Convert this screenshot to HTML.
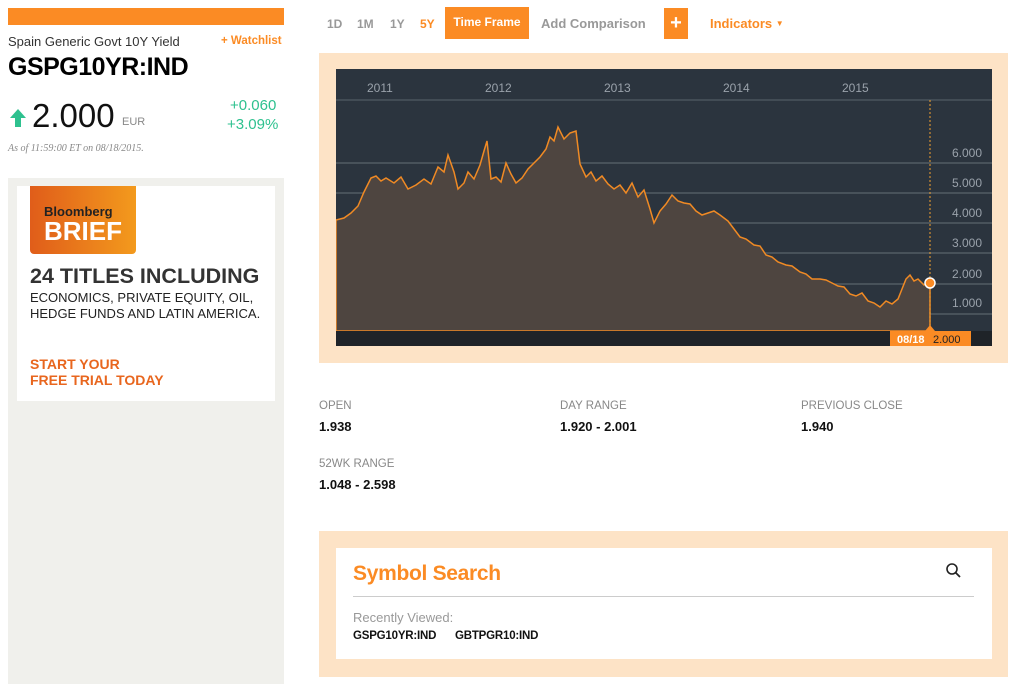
<!DOCTYPE html><html><head><style>
body{margin:0;width:1024px;height:684px;background:#fff;font-family:"Liberation Sans",sans-serif;position:relative;overflow:hidden}
.a{position:absolute;white-space:nowrap}
.b{font-weight:bold}
</style></head><body>
<div class="a" style="left:8px;top:8px;width:276px;height:17px;background:#fb8b24"></div>
<div class="a" style="left:8px;top:34px;font-size:13px;color:#333">Spain Generic Govt 10Y Yield</div>
<div class="a b" style="left:221px;top:35px;font-size:11.5px;color:#fb8b24">+ Watchlist</div>
<div class="a b" style="left:8px;top:53px;font-size:25px;color:#000;letter-spacing:-0.5px">GSPG10YR:IND</div>
<svg class="a" style="left:9px;top:108px" width="18" height="20"><path d="M9 1 L17 10 L12 10 L12 19 L6 19 L6 10 L1 10 Z" fill="#2ec18f"/></svg>
<div class="a" style="left:32px;top:97px;font-size:33px;color:#111">2.000</div>
<div class="a" style="left:122px;top:116px;font-size:11px;color:#888">EUR</div>
<div class="a" style="left:230px;top:97px;font-size:15px;color:#2ec18f">+0.060</div>
<div class="a" style="left:227px;top:116px;font-size:15px;color:#2ec18f">+3.09%</div>
<div class="a" style="left:8px;top:143px;font-size:10px;color:#888;font-style:italic;font-family:'Liberation Serif',serif">As of 11:59:00 ET on 08/18/2015.</div>
<div class="a" style="left:8px;top:178px;width:276px;height:506px;background:#f0f0ec"></div>
<div class="a" style="left:17px;top:186px;width:258px;height:215px;background:#fff"></div>
<div class="a" style="left:30px;top:186px;width:106px;height:68px;background:linear-gradient(90deg,#e05d1a,#f39a1d);border-radius:0 0 4px 4px"></div>
<div class="a b" style="left:44px;top:204px;font-size:13px;color:#222">Bloomberg</div>
<div class="a b" style="left:44px;top:216px;font-size:26px;color:#fff">BRIEF</div>
<div class="a b" style="left:30px;top:264px;font-size:21.5px;color:#333">24 TITLES INCLUDING</div>
<div class="a" style="left:30px;top:290px;font-size:13px;color:#222;line-height:16px">ECONOMICS, PRIVATE EQUITY, OIL,<br>HEDGE FUNDS AND LATIN AMERICA.</div>
<div class="a b" style="left:30px;top:356px;font-size:14px;color:#e8661e;line-height:16px">START YOUR<br>FREE TRIAL TODAY</div>

<div class="a b" style="left:327px;top:17px;font-size:12px;color:#999">1D</div>
<div class="a b" style="left:357px;top:17px;font-size:12px;color:#999">1M</div>
<div class="a b" style="left:390px;top:17px;font-size:12px;color:#999">1Y</div>
<div class="a b" style="left:420px;top:17px;font-size:12px;color:#fb8b24">5Y</div>
<div class="a b" style="left:445px;top:7px;width:84px;height:32px;background:#fb8b24;color:#fff;font-size:12px;line-height:31px;text-align:center">Time Frame</div>
<div class="a b" style="left:541px;top:16px;font-size:13px;color:#999">Add Comparison</div>
<div class="a b" style="left:664px;top:8px;width:24px;height:31px;background:#fb8b24;color:#fff;font-size:20px;line-height:30px;text-align:center">+</div>
<div class="a b" style="left:710px;top:16px;font-size:13px;color:#fb8b24">Indicators <span style="font-size:8px;vertical-align:2px">▼</span></div>

<div class="a" style="left:319px;top:53px;width:689px;height:310px;background:#fde3c6"></div>
<svg class="a" style="left:336px;top:69px" width="656" height="277">
<rect width="656" height="277" fill="#2b343e"/>
<line x1="0" y1="31" x2="656" y2="31" stroke="#5a636c"/>
<g stroke="#5a636c" stroke-width="1.2"><line x1="0" y1="94" x2="656" y2="94"/><line x1="0" y1="124" x2="656" y2="124"/><line x1="0" y1="154" x2="656" y2="154"/><line x1="0" y1="184" x2="656" y2="184"/><line x1="0" y1="215" x2="656" y2="215"/><line x1="0" y1="245" x2="656" y2="245"/></g>
<path d="M0 151 L8 149 L15 144 L22 137 L28 123 L35 109 L40 107 L45 112 L50 109 L58 114 L65 108 L72 120 L80 116 L88 110 L95 115 L102 98 L108 103 L112 86 L118 103 L122 120 L128 114 L132 103 L138 110 L144 96 L148 82 L151 72 L155 110 L160 108 L165 113 L170 94 L175 105 L180 114 L186 109 L192 100 L198 94 L204 88 L210 80 L214 68 L218 72 L222 58 L228 70 L234 64 L240 62 L244 95 L250 108 L255 103 L260 112 L266 107 L272 115 L278 120 L284 116 L290 124 L296 114 L302 128 L308 121 L314 140 L318 154 L324 142 L330 135 L336 126 L342 132 L348 134 L354 135 L360 142 L366 146 L372 144 L378 142 L384 146 L392 152 L398 160 L404 168 L410 170 L418 176 L424 177 L430 186 L436 188 L442 193 L450 196 L456 197 L464 203 L470 205 L476 210 L484 210 L490 211 L496 214 L502 217 L508 218 L514 225 L520 227 L526 224 L532 232 L538 234 L544 238 L550 232 L556 235 L562 230 L566 220 L570 210 L574 206 L578 212 L582 210 L588 216 L594 214 L594 262 L0 262 Z" fill="#4e4540" stroke="#f08a24" stroke-width="1.5"/>
<g fill="#9aa2ab" font-size="12" font-family="Liberation Sans">
<text x="31" y="23">2011</text><text x="149" y="23">2012</text><text x="268" y="23">2013</text><text x="387" y="23">2014</text><text x="506" y="23">2015</text>
<text x="616" y="88">6.000</text><text x="616" y="118">5.000</text><text x="616" y="148">4.000</text><text x="616" y="178">3.000</text><text x="616" y="209">2.000</text><text x="616" y="238">1.000</text></g>
<line x1="594" y1="31" x2="594" y2="262" stroke="#f0a030" stroke-dasharray="2,2"/>
<circle cx="594" cy="214" r="5" fill="#fb8b24" stroke="#fff" stroke-width="1.5"/>
<rect x="0" y="262" width="656" height="15" fill="#1f2328"/>
<rect x="554" y="262" width="81" height="15" fill="#fb8b24"/>
<path d="M589 262 L594 256 L599 262Z" fill="#fb8b24"/>
<text x="561" y="274" fill="#fff" font-size="11" font-weight="bold" font-family="Liberation Sans">08/18</text>
<text x="597" y="274" fill="#222" font-size="11" font-family="Liberation Sans">2.000</text>
</svg>

<div class="a" style="left:319px;top:400px;font-size:11.5px;color:#888">OPEN</div>
<div class="a b" style="left:319px;top:419px;font-size:13px;color:#111">1.938</div>
<div class="a" style="left:560px;top:400px;font-size:11.5px;color:#888">DAY RANGE</div>
<div class="a b" style="left:560px;top:419px;font-size:13px;color:#111">1.920 - 2.001</div>
<div class="a" style="left:801px;top:400px;font-size:11.5px;color:#888">PREVIOUS CLOSE</div>
<div class="a b" style="left:801px;top:419px;font-size:13px;color:#111">1.940</div>
<div class="a" style="left:319px;top:458px;font-size:11.5px;color:#888">52WK RANGE</div>
<div class="a b" style="left:319px;top:477px;font-size:13px;color:#111">1.048 - 2.598</div>

<div class="a" style="left:319px;top:531px;width:689px;height:146px;background:#fde3c6"></div>
<div class="a" style="left:336px;top:548px;width:656px;height:111px;background:#fff"></div>
<div class="a b" style="left:353px;top:562px;font-size:21px;color:#fb8b24;letter-spacing:-0.3px">Symbol Search</div>
<svg class="a" style="left:945px;top:562px" width="18" height="18"><circle cx="7" cy="7" r="5" fill="none" stroke="#222" stroke-width="1.6"/><line x1="10.5" y1="10.5" x2="15" y2="15" stroke="#222" stroke-width="1.8"/></svg>
<div class="a" style="left:353px;top:596px;width:621px;height:1px;background:#ccc"></div>
<div class="a" style="left:353px;top:610px;font-size:13px;color:#999">Recently Viewed:</div>
<div class="a b" style="left:353px;top:630px;font-size:11.5px;color:#111;letter-spacing:-0.2px">GSPG10YR:IND</div>
<div class="a b" style="left:455px;top:630px;font-size:11.5px;color:#111;letter-spacing:-0.2px">GBTPGR10:IND</div>
</body></html>
